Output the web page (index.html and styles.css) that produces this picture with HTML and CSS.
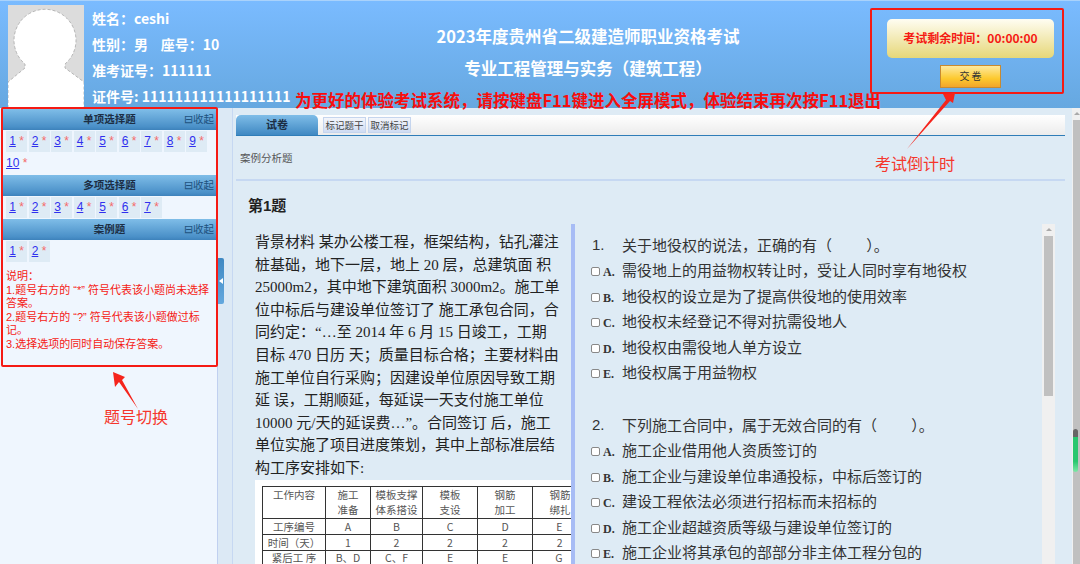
FILE: index.html
```html
<!DOCTYPE html>
<html>
<head>
    <title>考试系统</title>
    <link rel="stylesheet" href="styles.css">
</head>
<body>
    <div class="header">
        <svg class="photo" viewBox="0 0 76 103">
            <rect width="76" height="103" fill="#dcdcdc"/>
            <path d="M0 103V77L17 63V59A31 31 0 1 1 57 59V63L76 77V103Z" fill="#fff" stroke="#aaa" stroke-width="0.8" stroke-dasharray="3 2"/>
        </svg>
        <div class="info">
            <div>姓名：ceshi</div>
            <div>性别：男 &nbsp;&nbsp;&nbsp;座号：10</div>
            <div>准考证号：111111</div>
            <div>证件号: 111111111111111111</div>
        </div>
        <div class="title">
            <div class="title-line">2023年度贵州省二级建造师职业资格考试</div>
            <div class="title-line">专业工程管理与实务（建筑工程）</div>
            <div class="notice">为更好的体验考试系统，请按键盘F11键进入全屏模式，体验结束再次按F11退出</div>
        </div>
        <div class="timer-box">
            <div class="timer">考试剩余时间：00:00:00</div>
            <div class="submit">交 卷</div>
        </div>
    </div>

    <div class="content">
        <div class="sidebar">
            <div class="nav-box">
                <div class="nav-head">单项选择题<span class="fold">⊟收起</span></div>
                <div class="nums">
                    <a class="num"><u>1</u> <i>*</i></a><a class="num"><u>2</u> <i>*</i></a><a class="num"><u>3</u> <i>*</i></a><a class="num"><u>4</u> <i>*</i></a><a class="num"><u>5</u> <i>*</i></a><a class="num"><u>6</u> <i>*</i></a><a class="num"><u>7</u> <i>*</i></a><a class="num"><u>8</u> <i>*</i></a><a class="num"><u>9</u> <i>*</i></a><a class="num last"><u>10</u> <i>*</i></a>
                </div>
                <div class="nav-head">多项选择题<span class="fold">⊟收起</span></div>
                <div class="nums">
                    <a class="num"><u>1</u> <i>*</i></a><a class="num"><u>2</u> <i>*</i></a><a class="num"><u>3</u> <i>*</i></a><a class="num"><u>4</u> <i>*</i></a><a class="num"><u>5</u> <i>*</i></a><a class="num"><u>6</u> <i>*</i></a><a class="num"><u>7</u> <i>*</i></a>
                </div>
                <div class="nav-head">案例题<span class="fold">⊟收起</span></div>
                <div class="nums">
                    <a class="num"><u>1</u> <i>*</i></a><a class="num"><u>2</u> <i>*</i></a>
                </div>
                <div class="tips">
                    说明：<br>
                    1.题号右方的 “*” 符号代表该小题尚未选择答案。<br>
                    2.题号右方的 “?” 符号代表该小题做过标记。<br>
                    3.选择选项的同时自动保存答案。
                </div>
            </div>
        </div>
        <div class="splitter"><div class="handle"></div></div>

        <div class="main">
            <div class="tabs">
                <div class="tab">试卷</div>
                <div class="tab-btn">标记题干</div>
                <div class="tab-btn">取消标记</div>
            </div>
            <div class="type-name">案例分析题</div>
            <div class="q-title">第1题</div>
            <div class="paper">
                <div class="material">
                    <p>背景材料 某办公楼工程，框架结构，钻孔灌注<br>桩基础，地下一层，地上 20 层，总建筑面 积<br>25000m2，其中地下建筑面积 3000m2。施工单<br>位中标后与建设单位签订了 施工承包合同，合<br>同约定：“…至 2014 年 6 月 15 日竣工，工期<br>目标 470 日历 天；质量目标合格；主要材料由<br>施工单位自行采购；因建设单位原因导致工期<br>延 误，工期顺延，每延误一天支付施工单位<br>10000 元/天的延误费…”。合同签订 后，施工<br>单位实施了项目进度策划，其中上部标准层结<br>构工序安排如下:</p>
                    <div class="sheet">
                        <table>
                            <tr class="tall"><td>工作内容</td><td>施工<br>准备</td><td>模板支撑<br>体系搭设</td><td>模板<br>支设</td><td>钢筋<br>加工</td><td>钢筋<br>绑扎</td></tr>
                            <tr><td>工序编号</td><td>A</td><td>B</td><td>C</td><td>D</td><td>E</td></tr>
                            <tr><td>时间（天）</td><td>1</td><td>2</td><td>2</td><td>2</td><td>2</td></tr>
                            <tr class="short"><td>紧后工 序</td><td>B、D</td><td>C、F</td><td>E</td><td>E</td><td>G</td></tr>
                        </table>
                    </div>
                </div>
                <div class="questions">
                    <div class="q"><em>1.</em><span>关于地役权的说法，正确的有（　　&nbsp;）。</span></div>
                    <div class="opt"><b class="box"></b><b>A.</b><span>需役地上的用益物权转让时，受让人同时享有地役权</span></div>
                    <div class="opt"><b class="box"></b><b>B.</b><span>地役权的设立是为了提高供役地的使用效率</span></div>
                    <div class="opt"><b class="box"></b><b>C.</b><span>地役权未经登记不得对抗需役地人</span></div>
                    <div class="opt"><b class="box"></b><b>D.</b><span>地役权由需役地人单方设立</span></div>
                    <div class="opt"><b class="box"></b><b>E.</b><span>地役权属于用益物权</span></div>
                    <div class="q q-next"><em>2.</em><span>下列施工合同中，属于无效合同的有（　　&nbsp;）。</span></div>
                    <div class="opt"><b class="box"></b><b>A.</b><span>施工企业借用他人资质签订的</span></div>
                    <div class="opt"><b class="box"></b><b>B.</b><span>施工企业与建设单位串通投标，中标后签订的</span></div>
                    <div class="opt"><b class="box"></b><b>C.</b><span>建设工程依法必须进行招标而未招标的</span></div>
                    <div class="opt"><b class="box"></b><b>D.</b><span>施工企业超越资质等级与建设单位签订的</span></div>
                    <div class="opt"><b class="box"></b><b>E.</b><span>施工企业将其承包的部部分非主体工程分包的</span></div>
                </div>
                <div class="inner-scroll"><div class="scroll-up"></div><div class="inner-thumb"></div></div>
            </div>
        </div>
        <div class="page-scroll"><div class="scroll-up"></div><div class="page-thumb"></div><div class="green-thumb"></div></div>
    </div>

    <svg class="marks" viewBox="0 0 1080 564">
        <path d="M907 149L946 100L943 94L955 93L953 103L950 101Z" fill="#f5241c"/>
        <path d="M138 409L119 382L115 387L113 372L125 377L122 380Z" fill="#f5241c"/>
    </svg>
    <div class="mark-text mark-timer">考试倒计时</div>
    <div class="mark-text mark-nav">题号切换</div>
</body>
</html>
```

FILE: styles.css
```css
html, body { margin: 0; padding: 0; height: 564px; overflow: hidden; }
body { position: relative; width: 1080px; background: #deebf5; font-family: "Liberation Sans", "Noto Sans CJK SC", sans-serif; font-size: 12px; }

.header { display: flex; height: 108px; box-sizing: border-box; border-top: 1px solid #a9d2fb; background: linear-gradient(#7abbff, #66a8e0); color: #fff; font-family: "Noto Sans CJK SC", sans-serif; }
.photo { flex: none; width: 76px; height: 103px; margin: 4px 8px 0 8px; }
.info { flex: none; width: 202px; padding-top: 4px; font-size: 14px; font-weight: bold; line-height: 26px; white-space: nowrap; }
.title { flex: none; width: 588px; text-align: center; font-size: 16.5px; font-weight: bold; padding-top: 19px; }
.title-line { height: 32px; line-height: 32px; }
.notice { margin-top: 6px; color: #f80d0d; font-size: 16.5px; line-height: 20px; white-space: nowrap; }
.timer-box { flex: none; width: 194px; height: 86px; margin: 7px 0 0 -12px; box-sizing: border-box; border: 2px solid #f51a14; border-radius: 2px; padding: 9px 8px 0 15px; }
.timer { height: 39px; line-height: 37px; border-radius: 5px; background: linear-gradient(#fffdf2, #e6d778); color: #f51a14; font-size: 12px; font-weight: bold; text-align: center; }
.submit { width: 61px; height: 23px; margin: 7px auto 0 auto; box-sizing: border-box; border: 1px solid #c88a30; background: linear-gradient(#fde9a0, #fdc92e 60%, #f2a52a); color: #333; line-height: 20px; font-size: 10px; text-align: center; }

.content { display: flex; height: 456px; }
.sidebar { flex: none; width: 217px; background: #eff6fe; border-right: 1px solid #c0d0f0; }
.nav-box { box-sizing: border-box; width: 217px; height: 260px; margin: -1px 0 0 1px; border: 2px solid #f51a14; border-radius: 2px; position: relative; }
.nav-head { position: relative; height: 21px; line-height: 21px; text-align: center; font-weight: bold; font-size: 10.5px; color: #1c2e44; background: linear-gradient(#7fbde8, #4a90c8 85%, #3d82bb); }
.fold { position: absolute; right: 2px; top: 0; font-weight: normal; color: #20527e; }
.nums { display: flex; flex-wrap: wrap; gap: 1px 1.5px; padding: 1px 3px; }
.num { display: block; width: 21px; height: 21px; line-height: 21px; background: #deebf5; text-align: center; color: #3030ee; font-size: 12px; white-space: nowrap; }
.num.last { background: none; }
.num i { color: #f56a6a; font-size: 12px; font-style: normal; }
.tips { padding: 7px 3px 0 3px; color: #f51a14; font-size: 11px; line-height: 13.5px; }

.splitter { flex: none; width: 14px; background: #dce9f5; border-right: 1px solid #c6d8f2; position: relative; }
.handle { position: absolute; left: 0; top: 150px; width: 6px; height: 46px; border-radius: 0 2px 2px 0; background: linear-gradient(#3f88c2, #64a8de); }
.handle::after { content: ""; position: absolute; left: 1px; top: 20px; border: 3px solid transparent; border-left: 0; border-right: 4px solid #fff; }

.main { flex: none; width: 840px; padding: 7px 0 0 3px; box-sizing: border-box; overflow: hidden; position: relative; }
.tabs { display: flex; align-items: center; width: 829px; height: 21px; box-sizing: border-box; border-bottom: 1px solid #2f7db8; background: linear-gradient(#fff, #ececec); }
.tab { width: 82px; height: 20px; line-height: 20px; margin-right: 5px; border-radius: 5px 5px 0 0; background: linear-gradient(#7fbde8, #3f88c2); color: #1c2e44; font-size: 11px; font-weight: bold; text-align: center; }
.tab-btn { width: 43px; height: 16px; line-height: 15px; margin-right: 2px; box-sizing: border-box; border: 1px solid #c5d5ee; background: linear-gradient(#f4f6fb, #cfdcf3); color: #444; font-size: 9.5px; text-align: center; }
.type-name { width: 829px; height: 45px; box-sizing: border-box; padding: 14px 0 0 4px; border-bottom: 2px solid #c6d8f2; color: #555; font-size: 10.5px; line-height: 16px; }
.q-title { padding: 15px 0 0 12px; height: 28px; font-size: 15px; line-height: 20px; font-weight: bold; color: #222; }

.paper { display: flex; }
.material { flex: none; width: 335px; box-sizing: border-box; padding: 7px 0 0 19px; }
.material p { margin: 0; font-family: "Liberation Serif", "Noto Sans CJK SC", serif; font-size: 15px; line-height: 22.6px; color: #222; white-space: nowrap; }
.sheet { width: 316px; height: 86px; padding: 6px 0 0 7px; box-sizing: border-box; background: #fff; overflow: hidden; }
.sheet table { width: 308px; border-collapse: collapse; table-layout: fixed; font-family: "Noto Sans CJK SC", sans-serif; font-size: 10.5px; color: #555; text-align: center; }
.sheet td { box-sizing: border-box; border: 1px solid #333; padding: 0; height: 16px; line-height: 15px; width: 55px; white-space: nowrap; }
.sheet td:first-child { width: 63px; }
.sheet td:nth-child(2) { width: 45px; }
.sheet td:nth-child(3) { width: 52px; }
.sheet td:last-child { width: 38px; border-right: 0; text-align: right; }
.sheet tr:not(.tall) td:last-child { padding-right: 8px; }
.sheet .tall td { vertical-align: top; height: 32px; }
.sheet .short td { height: 15px; line-height: 14px; border-bottom: 0; }
.questions { flex: none; width: 471px; height: 340px; box-sizing: border-box; border-left: 4px solid #a7bcf5; padding: 7.5px 0 0 17px; font-family: "Liberation Serif", "Noto Sans CJK SC", serif; font-size: 15px; color: #333; overflow: hidden; }
.q { display: flex; align-items: center; height: 25.5px; white-space: nowrap; font-family: "Liberation Sans", "Noto Sans CJK SC", sans-serif; }
.opt { display: flex; align-items: baseline; height: 25.5px; line-height: 28px; white-space: nowrap; }
.q em { width: 30px; font-style: normal; }
.q-next { margin-top: 27px; }
.box { flex: none; width: 9px; height: 9px; margin: 0 3px 0 -1px; box-sizing: border-box; border: 1px solid #888; border-radius: 2px; background: #fff; }
.opt b:nth-child(2) { width: 19px; font-size: 12px; }
.inner-scroll { flex: none; width: 13px; height: 340px; padding: 0 2px; box-sizing: border-box; background: #f0f0f0; }
.scroll-up { height: 12px; position: relative; }
.scroll-up::after { content: ""; position: absolute; left: 2px; top: 4px; border: 3px solid transparent; border-top: 0; border-bottom: 3px solid #aaa; }
.inner-thumb { height: 160px; background: #c0c0c0; }

.page-scroll { flex: none; width: 8px; position: relative; margin-left: -1px; background: #f0f0f0; }
.page-thumb { margin-left: 1px; height: 444px; background: #c0c0c0; }
.green-thumb { position: absolute; left: 1px; top: 321px; width: 5px; height: 43px; border-radius: 3px; background: linear-gradient(#666 0 8px, #28c76f 8px, #28c76f 75%, #7fe8a8); }

.marks { position: absolute; left: 0; top: 0; width: 1080px; height: 564px; pointer-events: none; }
.mark-text { position: absolute; color: #f5362c; font-size: 16px; line-height: 20px; white-space: nowrap; }
.mark-timer { left: 875px; top: 155px; }
.mark-nav { left: 104px; top: 408px; }
```
